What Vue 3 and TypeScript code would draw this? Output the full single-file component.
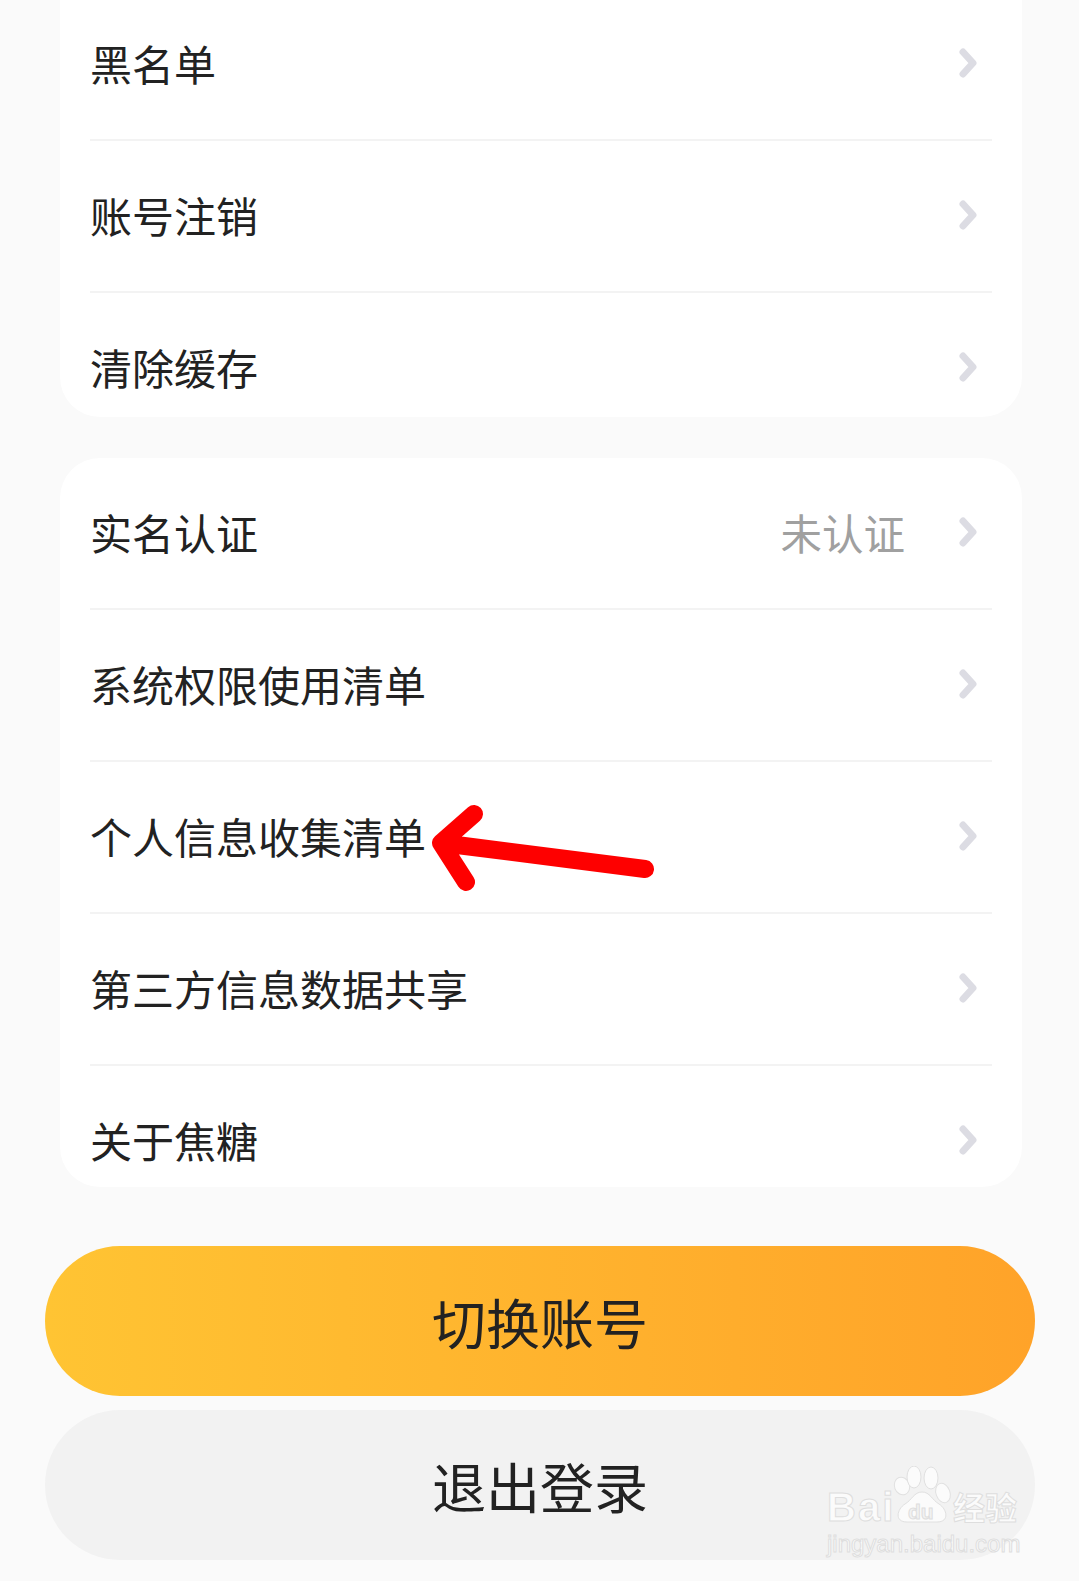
<script setup lang="ts">
interface MenuItem {
  label: string
  value?: string
}

const accountItems: MenuItem[] = [
  { label: '黑名单' },
  { label: '账号注销' },
  { label: '清除缓存' },
]

const infoItems: MenuItem[] = [
  { label: '实名认证', value: '未认证' },
  { label: '系统权限使用清单' },
  { label: '个人信息收集清单' },
  { label: '第三方信息数据共享' },
  { label: '关于焦糖' },
]

const groups = [accountItems, infoItems]
</script>

<template>
  <div class="page">
    <div class="content">
      <section v-for="(items, i) in groups" :key="i" class="card">
        <div v-for="item in items" :key="item.label" class="row">
          <span class="label">{{ item.label }}</span>
          <span v-if="item.value" class="value">{{ item.value }}</span>
          <svg class="chevron" width="18" height="30" viewBox="0 0 18 30">
            <path d="M4 4 L14 15 L4 26" />
          </svg>
        </div>
      </section>

      <div class="actions">
        <button type="button" class="btn primary">切换账号</button>
        <button type="button" class="btn secondary">退出登录</button>
      </div>
    </div>

    <!-- hand-drawn annotation on the screenshot -->
    <svg class="arrow" width="240" height="100" viewBox="0 0 240 100">
      <path d="M226 66 L22 40 M55 11 L22 40 L47 79" />
    </svg>

    <div class="watermark">
      <span class="wm-bai">Bai</span>
      <svg class="wm-paw" width="60" height="60" viewBox="0 0 60 60">
        <ellipse cx="9" cy="20" rx="7.5" ry="9" transform="rotate(-20 9 20)" />
        <ellipse cx="21" cy="11" rx="7" ry="11" />
        <ellipse cx="38" cy="12" rx="7" ry="11" />
        <ellipse cx="50" cy="27" rx="7" ry="10" transform="rotate(-20 50 27)" />
        <path d="M29 26 C21 26 19 34 12 38 C4 43 1 56 14 56 L44 56 C57 56 54 43 46 38 C39 34 37 26 29 26 Z" />
      </svg>
      <span class="wm-du">du</span>
      <span class="wm-jy">经验</span>
      <span class="wm-url">jingyan.baidu.com</span>
    </div>
  </div>
</template>

<style>
html, body { margin: 0; background: #fafafa; }
</style>

<style scoped>
.page {
  position: relative;
  height: 1581px;
  overflow: hidden;
  background: #fafafa;
  font-family: "Noto Sans CJK SC", "Noto Sans", sans-serif;
  color: #222;
}
.content { margin-top: -11px; display: flex; flex-direction: column; }
.card {
  margin: 0 57px 41px 60px;
  padding: 0 30px;
  background: #fff;
  border-radius: 40px;
}
.card:first-child { border-radius: 0 0 40px 40px; }
.card:nth-child(2) { margin-bottom: 59px; }
.row {
  display: flex;
  align-items: center;
  height: 152px;
  box-sizing: border-box;
  padding-right: 15px;
  padding-bottom: 2px;
  border-bottom: 2px solid #f3f3f3;
  overflow: hidden;
}
.row:last-child { height: 124px; padding-bottom: 0; border-bottom: none; align-items: flex-start; }
.card:nth-child(2) .row:last-child { height: 121px; }
.label { flex: 1; font-size: 42px; line-height: 148px; white-space: nowrap; }
.value { font-size: 41.5px; line-height: 148px; color: #a0a0a0; margin-right: 54px; }
.chevron { flex: 0 0 auto; }
.row:last-child .chevron { margin-top: 59px; }
.chevron path { fill: none; stroke: #dcdce3; stroke-width: 7; stroke-linecap: round; stroke-linejoin: round; }
.actions { display: flex; flex-direction: column; gap: 14px; margin: 0 44px 0 45px; }
.btn {
  height: 150px;
  border: none;
  border-radius: 75px;
  padding: 0;
  font-family: inherit;
  font-size: 54px;
  color: #222;
}
.primary { background: linear-gradient(90deg, #ffc433, #ffa329); }
.secondary { background: #f2f2f2; }
.arrow { position: absolute; left: 419px; top: 803px; }
.arrow path { fill: none; stroke: #fe0000; stroke-width: 18; stroke-linecap: round; stroke-linejoin: round; }
.watermark { position: absolute; left: 827px; top: 1466px; width: 200px; height: 100px; }
.wm-bai, .wm-du, .wm-jy, .wm-url {
  position: absolute;
  font-family: "Liberation Sans", "Noto Sans CJK SC", sans-serif;
  color: #fbfbfb;
  -webkit-text-stroke: 1px #dedede;
  white-space: nowrap;
}
.wm-bai { left: 0; top: 21px; font-size: 40px; line-height: 40px; font-weight: 700; letter-spacing: 2px; }
.wm-paw { position: absolute; left: 66px; top: 0; }
.wm-paw ellipse, .wm-paw path { fill: #fbfbfb; stroke: #e0e0e0; stroke-width: 1; }
.wm-du { left: 81px; top: 35px; font-size: 21px; line-height: 21px; font-weight: 700; color: #f2f2f2; }
.wm-jy { left: 126px; top: 27px; font-size: 32px; line-height: 32px; font-weight: 700; }
.wm-url { left: 0; top: 64px; font-size: 24px; line-height: 28px; }
</style>
